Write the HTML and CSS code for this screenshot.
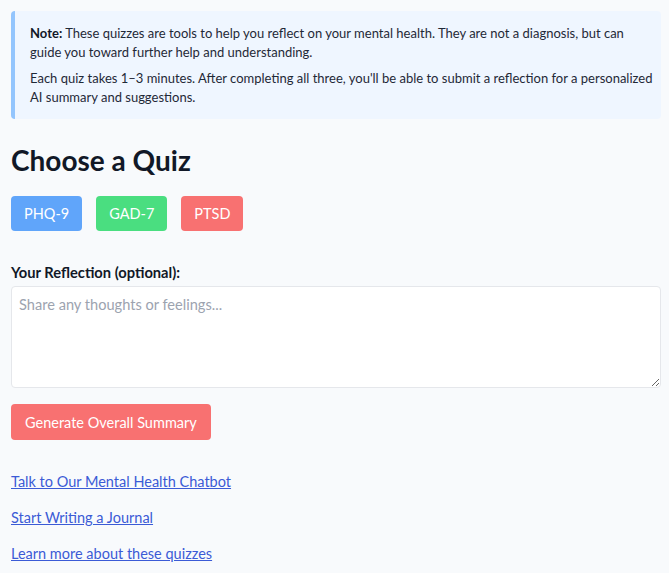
FILE: index.html
```html
<!DOCTYPE html>
<html lang="en">

<head>
  <meta charset="UTF-8" />
  <meta name="viewport" content="width=device-width, initial-scale=1.0"/>
  <title>Mental Health Quizzes</title>
  <link rel="stylesheet" href="styles.css">
</head>

<body>
  <div class="page">
    <div class="note">
      <p><strong>Note:</strong> These quizzes are tools to help you reflect on your mental health. They are not a diagnosis, but can guide you toward further help and understanding.</p>
      <p>Each quiz takes 1–3 minutes. After completing all three, you'll be able to submit a reflection for a personalized AI summary and suggestions.</p>
    </div>

    <h1>Choose a Quiz</h1>

    <div class="quiz-buttons">
      <button class="btn btn-blue">PHQ-9</button>
      <button class="btn btn-green">GAD-7</button>
      <button class="btn btn-red">PTSD</button>
    </div>

    <label class="reflection-label" for="reflection">Your Reflection (optional):</label>
    <textarea id="reflection" placeholder="Share any thoughts or feelings..."></textarea>

    <button class="btn btn-red btn-summary">Generate Overall Summary</button>

    <div class="links">
      <a href="#">Talk to Our Mental Health Chatbot</a>
      <a href="#">Start Writing a Journal</a>
      <a href="#">Learn more about these quizzes</a>
    </div>
  </div>
</body>
</html>
```

FILE: styles.css
```css
body {
  font-family: 'Lato', 'Open Sans', sans-serif;
  margin: 0;
  padding: 0;
  background-color: #f8fafc;
  color: #1f2937;
}

.page {
  padding: 11px 8px 11px 11px;
}

.note {
  background-color: #eff6ff;
  border-left: 4px solid #93c5fd;
  border-radius: 4px;
  padding: 13px 6px 12px 15px;
  font-size: 13px;
  line-height: 19px;
  color: #1f2937;
}

.note p {
  margin: 0;
}

.note p + p {
  margin-top: 7px;
}

.note strong {
  color: #111827;
}

h1 {
  font-size: 28px;
  font-weight: 700;
  color: #111827;
  margin: 24px 0 19px;
  line-height: 34px;
}

.quiz-buttons {
  display: flex;
  gap: 14px;
  margin-bottom: 31px;
}

.btn {
  font-family: inherit;
  font-size: 14.5px;
  color: #fff;
  border: none;
  border-radius: 4px;
  padding: 0 13px;
  height: 35px;
  white-space: nowrap;
  cursor: pointer;
}

.quiz-buttons .btn {
  min-width: 62px;
}

.btn-blue {
  background-color: #60a5fa;
}

.btn-green {
  background-color: #4ade80;
}

.btn-red {
  background-color: #f87171;
}

.reflection-label {
  display: block;
  font-size: 14.7px;
  line-height: 20px;
  font-weight: 700;
  color: #111827;
  margin-bottom: 4px;
}

textarea {
  display: block;
  box-sizing: border-box;
  width: 100%;
  height: 102px;
  padding: 9px 7px;
  font-family: inherit;
  font-size: 14.6px;
  border: 1px solid #e5e7eb;
  border-radius: 4px;
  background-color: #fff;
  resize: vertical;
}

textarea::placeholder {
  color: #9ca3af;
}

.btn-summary {
  margin-top: 16px;
  height: 36px;
  padding: 0 14px;
}

.links {
  display: flex;
  flex-direction: column;
  align-items: flex-start;
  gap: 16px;
  margin-top: 32px;
}

.links a {
  color: #3b5bd6;
  font-size: 14.5px;
  line-height: 20px;
}
```
